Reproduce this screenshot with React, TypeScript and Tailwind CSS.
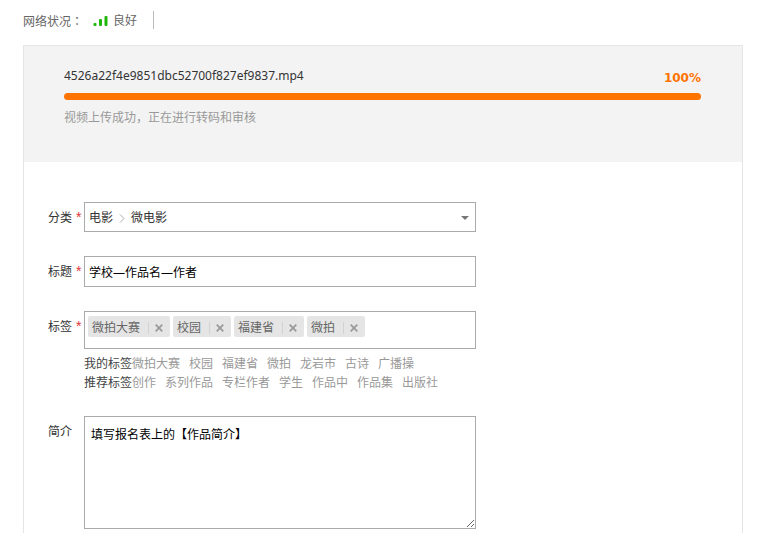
import { useState } from "react";

const myTags = ["微拍大赛", "校园", "福建省", "微拍", "龙岩市", "古诗", "广播操"];
const hotTags = ["创作", "系列作品", "专栏作者", "学生", "作品中", "作品集", "出版社"];

function Label({ htmlFor, text, required }: { htmlFor: string; text: string; required?: boolean }) {
  return (
    <label htmlFor={htmlFor} className="w-9 shrink-0 pt-[6px] text-[#333]">
      {text}
      {required && <span className="ml-1 font-['Liberation_Sans',sans-serif] text-sm leading-none text-[#d33]">*</span>}
    </label>
  );
}

function TagLine({ title, tags, onPick }: { title: string; tags: string[]; onPick: (tag: string) => void }) {
  return (
    <div className="flex flex-wrap leading-[19px]">
      <span className="text-[#444]">{title}</span>
      <div className="flex flex-wrap gap-x-[9px]">
        {tags.map((tag) => (
          <button key={tag} type="button" onClick={() => onPick(tag)} className="text-[#999] hover:text-[#ff7300]">
            {tag}
          </button>
        ))}
      </div>
    </div>
  );
}

export default function App() {
  const [title, setTitle] = useState("学校—作品名—作者");
  const [intro, setIntro] = useState("填写报名表上的【作品简介】");
  const [tags, setTags] = useState(["微拍大赛", "校园", "福建省", "微拍"]);
  const [newTag, setNewTag] = useState("");
  const progress = 100;

  const addTag = (tag: string) => {
    if (tag && !tags.includes(tag)) setTags([...tags, tag]);
  };

  return (
    <div className="flex min-h-screen flex-col bg-white pl-[23px] pr-5 font-['Noto_Sans','Noto_Sans_CJK_SC',sans-serif] text-[12px] leading-5">
      {/* network status */}
      <div className="flex h-[45px] items-start pt-[11px] text-[#666]">
        <span>
          网络状况<span className="font-['Noto_Sans_CJK_TC',sans-serif]">：</span>
        </span>
        <svg className="ml-[10px] mt-[5px]" width="15" height="10" viewBox="0 0 15 10" fill="#1fb80b" aria-hidden="true">
          <rect x="0.5" y="7" width="3" height="3" rx="1" />
          <rect x="6" y="3" width="3" height="7" rx="1" />
          <rect x="11.5" y="0" width="3" height="10" rx="1" />
        </svg>
        <span className="ml-[5px]">良好</span>
        <span className="ml-4 h-[18px] border-l border-[#bbb]" />
      </div>

      <div className="flex-1 border border-b-0 border-[#e5e5e5]">
        {/* upload progress */}
        <div className="bg-[#f3f3f3] pt-5 pr-[41px] pb-[34px] pl-10">
          <div className="flex h-5 justify-between">
            <span className="text-[#333]">4526a22f4e9851dbc52700f827ef9837.mp4</span>
            <span className="pt-[2px] font-['DejaVu_Sans',sans-serif] font-bold text-[#ff7300]">{progress}%</span>
          </div>
          <div className="mt-[7px] h-[7px] rounded-full">
            <div className="h-full rounded-full bg-[#ff7300]" style={{ width: `${progress}%` }} />
          </div>
          <p className="mt-2 text-[#999]">视频上传成功，正在进行转码和审核</p>
        </div>

        <form className="flex flex-col gap-6 px-6 pt-10" onSubmit={(e) => e.preventDefault()}>
          <div className="flex">
            <Label htmlFor="category" text="分类" required />
            <div className="relative flex h-[30px] w-full max-w-[392px] items-center border border-[#aaa] px-1 pt-[2px] text-[#333]">
              <span>电影</span>
              <svg className="mx-[6px]" width="6" height="9" viewBox="0 0 6 9" fill="none" stroke="#aaa" aria-hidden="true">
                <path d="M1 0.5L5 4.5L1 8.5" />
              </svg>
              <span>微电影</span>
              <svg className="ml-auto mr-[2px]" width="8" height="4" viewBox="0 0 8 4" fill="#777" aria-hidden="true">
                <path d="M0 0H8L4 4Z" />
              </svg>
              <select id="category" className="absolute inset-0 w-full cursor-pointer opacity-0">
                <option>微电影</option>
              </select>
            </div>
          </div>

          <div className="flex">
            <Label htmlFor="title" text="标题" required />
            <input
              id="title"
              value={title}
              onChange={(e) => setTitle(e.target.value)}
              className="h-[31px] w-full max-w-[392px] border border-[#aaa] px-1 text-black outline-none"
            />
          </div>

          <div className="flex">
            <Label htmlFor="tags" text="标签" required />
            <div className="w-full max-w-[392px]">
              <div className="flex min-h-[38px] flex-wrap items-start gap-[3px] border border-[#aaa] px-[3px] py-1">
                {tags.map((tag) => (
                  <span key={tag} className="flex h-[21px] items-center rounded-xs bg-[#e5e5e5] pt-[2px] pl-1 text-[#666]">
                    {tag}
                    <span className="ml-2 h-3 border-l border-[#d3d3d3]" />
                    <button
                      type="button"
                      aria-label={`删除${tag}`}
                      onClick={() => setTags(tags.filter((t) => t !== tag))}
                      className="flex h-full w-[21px] items-center pl-[6px] text-[#999]"
                    >
                      <svg width="8" height="8" viewBox="0 0 8 8" stroke="currentColor" strokeWidth="1.7">
                        <path d="M0.7 0.7L7.3 7.3M7.3 0.7L0.7 7.3" />
                      </svg>
                    </button>
                  </span>
                ))}
                <input
                  id="tags"
                  value={newTag}
                  onChange={(e) => setNewTag(e.target.value)}
                  onKeyDown={(e) => {
                    if (e.key !== "Enter") return;
                    addTag(newTag.trim());
                    setNewTag("");
                  }}
                  className="h-[21px] w-10 flex-1 outline-none"
                />
              </div>
              <div className="mt-[5px]">
                <TagLine title="我的标签" tags={myTags} onPick={addTag} />
                <TagLine title="推荐标签" tags={hotTags} onPick={addTag} />
              </div>
            </div>
          </div>

          <div className="flex">
            <Label htmlFor="intro" text="简介" />
            <textarea
              id="intro"
              value={intro}
              onChange={(e) => setIntro(e.target.value)}
              className="h-[113px] w-full max-w-[392px] border border-[#aaa] px-[6px] py-2 text-black outline-none"
            />
          </div>
        </form>
      </div>
    </div>
  );
}
